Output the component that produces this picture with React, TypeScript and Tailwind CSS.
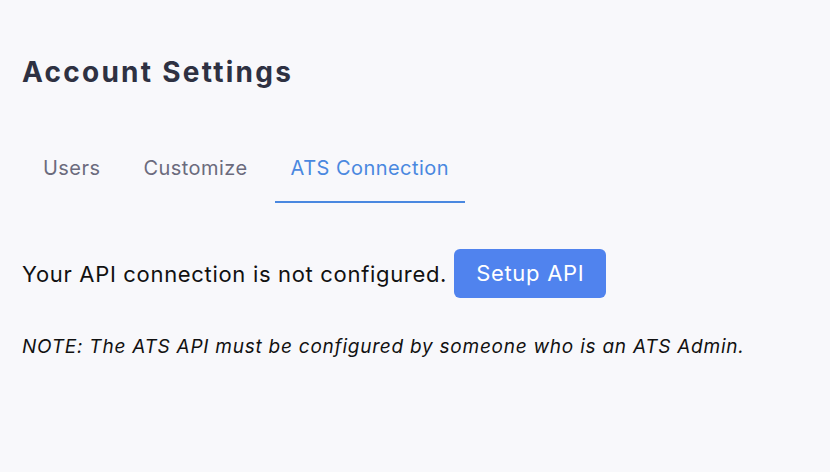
import { useState } from "react";

const tabs = ["Users", "Customize", "ATS Connection"];

export default function App() {
  const [active, setActive] = useState("ATS Connection");

  return (
    <div className="min-h-screen w-full bg-[#f8f8fb] px-[22px] pt-[52px] font-['Inter',sans-serif]">
      {/* Header */}
      <h1 className="text-[28px] leading-[40px] font-bold tracking-[2.25px] text-[#2e3142]">Account Settings</h1>

      {/* Tabs */}
      <div className="mt-[62px] ml-[5px] flex gap-[11px]">
        {tabs.map((t) => (
          <button
            key={t}
            onClick={() => setActive(t)}
            className={
              t === active
                ? "px-4 pb-[19px] text-[20px] leading-[28px] tracking-[0.45px] text-[#4a88e0] border-b-2 border-[#4a88e0]"
                : "px-4 pb-[19px] text-[20px] leading-[28px] tracking-[0.45px] text-[#6b6b7d] border-b-2 border-transparent"
            }
          >
            {t}
          </button>
        ))}
      </div>

      {/* Connection status */}
      <div className="mt-[46px] flex items-center gap-[7px]">
        <p className="text-[22px] leading-[30px] tracking-[0.68px] text-[#111]">Your API connection is not configured.</p>
        <button className="h-[49px] rounded-[6px] bg-[#5083ee] px-[22px] text-[22px] tracking-[0.7px] text-white">
          Setup API
        </button>
      </div>

      <p className="mt-[35px] text-[19px] leading-[28px] italic tracking-[0.76px] text-[#111]">
        NOTE: The ATS API must be configured by someone who is an ATS Admin.
      </p>
    </div>
  );
}
